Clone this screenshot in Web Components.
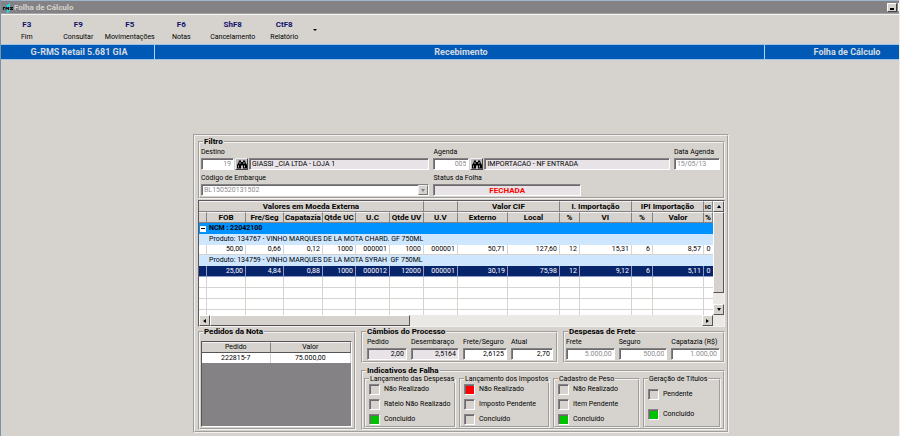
<!DOCTYPE html>
<html lang="pt-BR">
<head>
<meta charset="utf-8">
<title>Folha de Cálculo</title>
<style>
  :root{--face:#d6d3ce;--shade:#848284;--ink:#000;--navy:#10106a;--blue:#0059b5;--ro:#e7e3e7}
  html,body{margin:0;height:100%}
  body{background:var(--face);color:var(--ink);font:7px/8px Roboto,"Liberation Sans",sans-serif;overflow:hidden}
</style>
</head>
<body>
<rms-app></rms-app>
<script>
const base = '*{box-sizing:border-box}input,select,button{font:inherit;color:inherit;margin:0;border-radius:0;outline:0}';
function define(name, render){
  customElements.define(name, class extends HTMLElement{
    connectedCallback(){
      if(this.shadowRoot) return;
      const t = document.createElement('template');
      t.innerHTML = '<style>'+base+'</style>'+render(this);
      this.attachShadow({mode:'open'}).append(t.content.cloneNode(true));
    }
  });
}
const a = (el,n,d='') => el.getAttribute(n) ?? d;

define('rms-titlebar', el => `<style>
  :host{display:flex;align-items:center;height:15px;padding:0 0 0 2px;gap:1px;background:var(--shade);border-top:1px solid #9db6cc;border-bottom:1px solid #f4f3f1;box-shadow:inset 0 -1px #a5a2a4;color:var(--face);font-size:8px;line-height:12px;font-weight:bold;overflow:hidden}
  h1{margin:0;font:inherit;flex:1}
  button{width:10px;height:9px;padding:0;background:var(--face);border:1px solid;border-color:#fff #444 #444 #fff;display:flex;flex:none;align-items:flex-end;justify-content:center}
  button i{width:4px;height:2px;background:#000;margin-bottom:1px}
  button.max{width:1px;border-right:0}
</style>
<svg width="10" height="10" viewBox="0 0 10 10" aria-hidden="true">
  <path d="M3 3L7 0L7 3L4 5ZM3 9L5 6L7 7L5 10Z" fill="#18e0e8"/>
  <path d="M0 4h2v1H1v2H0ZM2.500 4h1.500l.5 1 .5-1H6v3H5V6H3.500v1h-1ZM7 4h3v1H8.500l1.500 1v1H7V6h1.500L7 5Z" fill="#0b1418"/>
  <path d="M5 3h2v1H5Z" fill="#18e0e8"/>
</svg>
<h1><slot></slot></h1>
<button aria-label="Minimizar"><i></i></button><button class="max" aria-label="Maximizar"></button>`);

define('rms-tool', el => `<style>
  :host{display:block}
  button{width:100%;border:0;background:none;padding:5px 0 3px;display:grid;gap:2px;justify-items:center;white-space:nowrap;line-height:10px}
  b{color:var(--navy);font-size:8px}
</style><button><b>${a(el,'key')}</b><span><slot></slot></span></button>`);

define('rms-toolbar', () => `<style>
  :host{display:flex;align-items:center;height:29px}
  nav{display:grid;grid-template-columns:repeat(6,1fr);width:309px}
  .more{border:0;background:none;padding:0 3px;height:8px;display:flex;align-items:center}
  .more i{border:2px solid transparent;border-top-color:#000;border-bottom:0}
</style><nav><slot></slot></nav><button class="more" aria-label="Mais opções"><i></i></button>`);

define('rms-banner', () => `<style>
  :host{display:grid;grid-template-columns:154px 1fr 156px;margin-right:-22px;height:16px;background:var(--blue);border:1px solid #9cc3ea;border-width:1px 0;color:#d3dbe2;font-size:9px;line-height:14px;font-weight:bold;text-align:center}
  ::slotted(*){display:block;padding-left:3px}
  ::slotted(:not(:last-child)){border-right:1px solid #b5d3f0}
  ::slotted(:last-child){padding-left:8px}
</style><slot></slot>`);

define('rms-group', el => `<style>
  :host{display:block;min-width:0}
  fieldset{margin:0;min-width:0;height:100%;border:2px groove #f3f2f0;padding:var(--group-pad,2px 3px 1px 1px)}
  legend{padding:0 1px;margin-left:2px;line-height:8px;height:8px;white-space:nowrap;color:#000;font-size:8px;font-weight:bold}
  :host([minor]) legend{font-size:7px;font-weight:normal;margin-left:0}
</style><fieldset><legend>${a(el,'label')}</legend><slot></slot></fieldset>`);

const well = `border:1px solid;border-color:var(--shade) #fff #fff var(--shade);box-shadow:inset 1px 1px #6b696b`;

define('rms-field', el => `<style>
  :host{display:block;min-width:0}
  label{display:block;line-height:8px;white-space:nowrap;margin-bottom:2px}
  .line{display:flex;gap:1px}
  input{display:block;min-width:0;width:100%;height:12px;padding:0 2px;line-height:10px;background:#fff;${well}}
  input:disabled{color:#8d8b8d;-webkit-text-fill-color:#8d8b8d}
  input[readonly]{background:var(--ro)}
  .num{text-align:right}
  .code{flex:none;width:${a(el,'code-width','33')}px}
  :host([alert]) input{color:#f00;font-weight:bold;font-size:8px;text-align:center}
  button{flex:none;width:13px;height:12px;padding:0;background:#bdbabd;border:1px solid;border-color:#eee #444 #444 #eee;display:flex;align-items:center;justify-content:center}
  .combo{position:relative}
  select{appearance:none;display:block;width:100%;height:12px;padding:0 14px 0 2px;line-height:10px;background:#fff;opacity:1;${well}}
  select:disabled{color:#8d8b8d}
  .drop{position:absolute;right:1px;top:1px;width:10px;height:10px;background:var(--face);border:1px solid;border-color:#eee #777 #777 #eee;display:flex;align-items:center;justify-content:center;pointer-events:none}
  .drop i{border:2px solid transparent;border-top:3px solid var(--shade);border-bottom:0}
</style>
<label for="f">${a(el,'label')}</label>` + (
  el.hasAttribute('combo') ? `<div class="combo"><select id="f" disabled><option>${a(el,'value')}</option></select><span class="drop"><i></i></span></div>` :
  el.hasAttribute('code') ? `<div class="line"><input id="f" class="num code" disabled value="${a(el,'code')}">
    <button aria-label="Pesquisar ${a(el,'label')}"><svg width="10" height="9" viewBox="0 0 10 9" aria-hidden="true"><path d="M2 0.500H4V2H6V0.500H8L8.500 2.500L10 5V8.500H6V5.500H4V8.500H0V5L1.500 2.500Z" fill="#000"/><path d="M1.500 5.500V7.500M7.500 5.500V7.500M3 2V4M7 2V4" stroke="#bbb" stroke-width=".9"/></svg></button>
    <input readonly aria-label="${a(el,'label')} (descrição)" value="${a(el,'value')}"></div>` :
  `<input id="f" class="${el.hasAttribute('num')?'num':''}" value="${a(el,'value')}" ${el.hasAttribute('off')?'disabled':''} ${el.hasAttribute('ro')?'readonly':''}>`));

define('rms-light', el => `<style>
  :host{display:flex;align-items:center;gap:4px;line-height:11px;white-space:nowrap}
  i{flex:none;width:11px;height:11px;background:${a(el,'color','var(--face)')};${well}}
</style><i></i><slot></slot>`);

const cells = list => list.map(v=>`<td>${v}</td>`).join('');
define('rms-sheet', () => `<style>
  :host{display:block;background:#fff;border:1px solid;border-color:#5a585a #f3f2f0 #f3f2f0 #5a585a}
  .frame{display:grid;grid-template-columns:minmax(0,1fr) 11px;grid-template-rows:auto 11px}
  table{width:100%;table-layout:fixed;border-collapse:separate;border-spacing:0}
  th,td{padding:0;white-space:nowrap;overflow:hidden}
  th{height:11px;line-height:9px;font-size:8px;color:#000;background:var(--face);border:1px solid;border-color:#f3f2f0 #848284 #848284 #f3f2f0;border-left-width:0}
  td{height:11px;line-height:10px;text-align:right;padding-right:2px;border-right:1px solid #d6d3ce;border-bottom:1px solid #d6d3ce}
  td:last-child{text-align:center;padding:0;border-right:0}
  .ncm td,.prod td{text-align:left;border:0;line-height:11px;padding-left:2px}
  .ncm td{background:#0092ff;color:#000;font-weight:bold}
  .prod td{background:#cee7ff}
  .ncm td:first-child{padding:0}
  .box{display:block;width:6px;height:6px;margin-left:1px;background:#fff linear-gradient(#000,#000) center/4px 1px no-repeat}
  .val td{height:10px;line-height:9px}
  .sel td{background:#08246b;color:#fff;border-color:#8c9cc6}
  .cut td{height:5px;border-bottom:0}
  .v,.h{background:#ebe9e6;display:flex}
  .v{flex-direction:column}
  .v button,.h button,.thumb{width:11px;height:11px;padding:0;flex:none;background:var(--face);border:1px solid;border-color:#fff #555 #555 #fff;display:flex;align-items:center;justify-content:center}
  .v .thumb{height:auto;flex:0 0 81px}
  .h .thumb{width:39%}
  .gap{flex:1}
  .corner{background:#ebe9e6}
  i{border:2px solid transparent}
  .up{border-bottom:3px solid #000;border-top:0}.down{border-top:3px solid #000;border-bottom:0}
  .left{border-right:3px solid #000;border-left:0}.right{border-left:3px solid #000;border-right:0}
</style>
<div class="frame">
<table>
  <colgroup>${[8,39,38,39,33,34,34,34,50,52,20,52,21,51,9].map(w=>`<col style="width:${(w/5.14).toFixed(2)}%">`).join('')}</colgroup>
  <thead>
    <tr><th colspan="7">Valores em Moeda Externa</th><th></th><th colspan="2">Valor CIF</th><th colspan="2">I. Importação</th><th colspan="2">IPI Importação</th><th>ıc</th></tr>
    <tr>${['','FOB','Fre/Seg','Capatazia','Qtde UC','U.C','Qtde UV','U.V','Externo','Local','%','VI','%','Valor','%'].map(v=>`<th>${v}</th>`).join('')}</tr>
  </thead>
  <tbody>
    <tr class="ncm"><td><span class="box"></span></td><td colspan="14" style="text-align:left">NCM : 22042100</td></tr>
    <tr class="prod"><td></td><td colspan="14" style="text-align:left">Produto: 134767 - VINHO MARQUES DE LA MOTA CHARD. GF 750ML</td></tr>
    <tr class="val">${cells(['','50,00','0,66','0,12','1000','000001','1000','000001','50,71','127,60','12','15,31','6','8,57','0'])}</tr>
    <tr class="prod"><td></td><td colspan="14" style="text-align:left">Produto: 134759 - VINHO MARQUES DE LA MOTA SYRAH &nbsp;GF 750ML</td></tr>
    <tr class="sel">${cells(['','25,00','4,84','0,88','1000','000012','12000','000001','30,19','75,98','12','9,12','6','5,11','0'])}</tr>
    ${['','','','cut'].map(c=>`<tr class="${c}">${cells(Array(15).fill(''))}</tr>`).join('')}
  </tbody>
</table>
<div class="v"><button aria-label="Acima"><i class="up"></i></button><div class="thumb"></div><div class="gap"></div><button aria-label="Abaixo"><i class="down"></i></button></div>
<div class="h"><button aria-label="Esquerda"><i class="left"></i></button><div class="thumb"></div><div class="gap"></div><button aria-label="Direita"><i class="right"></i></button></div>
<div class="corner"></div>
</div>`);

define('rms-orders', () => `<style>
  :host{display:block;height:86px;background:var(--shade);border:1px solid;border-color:#555 #fff #fff #555}
  table{width:100%;table-layout:fixed;border-collapse:separate;border-spacing:0;text-align:center}
  th{padding:0;font-weight:normal;height:11px;line-height:9px;background:var(--face);border:1px solid;border-color:#f3f2f0 #848284 #555 #f3f2f0;border-left-width:0}
  td{padding:0;height:10px;line-height:9px;background:#fff;border-right:1px solid #d6d3ce}
  col:first-child{width:46%}
</style><table><colgroup><col><col></colgroup><thead><tr><th>Pedido</th><th>Valor</th></tr></thead><tbody><tr><td>222815-7</td><td>75.000,00</td></tr></tbody></table>`);

define('rms-app', () => `<style>
  :host{display:block;min-height:100%;border-left:1px solid #7c93a6;border-right:1px solid #efedea;overflow:hidden}
  main{margin:74px 170px 0 192px;border:2px groove #f3f2f0;padding:2px 2px 1px 3px}
  .filter{display:grid;grid-template-columns:228fr 236fr 46fr;gap:4px}
  .filter rms-field[alert]{margin-right:89px}
  rms-sheet{margin:1px 0}
  .bottom{display:grid;grid-template-columns:158fr 364fr;gap:5px}
  .right{display:grid;gap:4px}
  .row{display:grid;gap:5px}
  .top{grid-template-columns:197fr 162fr}
  .rates{display:grid;grid-template-columns:40fr 48fr 44fr 42fr;gap:4px;margin-left:3px}
  .costs{display:grid;grid-template-columns:1fr 1fr 1fr;gap:4px}
  .orders{--group-pad:5px 2px 0 1px}
  .fail{--group-pad:0 2px 0 1px}
  .lights{--group-pad:1px 1px 1px 3px;display:grid;grid-template-columns:92fr 91fr 87fr 78fr;gap:3px}
  .list{display:grid;gap:4px}
  .list.two{gap:9px;padding:5px 0}
</style>
<rms-titlebar>Folha de Cálculo</rms-titlebar>
<rms-toolbar>
  <rms-tool key="F3">Fim</rms-tool><rms-tool key="F9">Consultar</rms-tool><rms-tool key="F5">Movimentações</rms-tool>
  <rms-tool key="F6">Notas</rms-tool><rms-tool key="ShF8">Cancelamento</rms-tool><rms-tool key="CtF8">Relatório</rms-tool>
</rms-toolbar>
<rms-banner><span>G-RMS Retail 5.681 GIA</span><span>Recebimento</span><span>Folha de Cálculo</span></rms-banner>
<main>
  <rms-group label="Filtro"><div class="filter">
    <rms-field label="Destino" code="19" value="GIASSI _CIA LTDA - LOJA 1"></rms-field>
    <rms-field label="Agenda" code="005" code-width="36" value="IMPORTACAO - NF ENTRADA"></rms-field>
    <rms-field label="Data Agenda" off value="15/05/13"></rms-field>
    <rms-field label="Código de Embarque" combo value="BL150520131502"></rms-field>
    <rms-field label="Status da Folha" alert ro value="FECHADA"></rms-field>
  </div></rms-group>
  <rms-sheet></rms-sheet>
  <div class="bottom">
    <rms-group class="orders" label="Pedidos da Nota"><rms-orders></rms-orders></rms-group>
    <div class="right">
      <div class="row top">
        <rms-group label="Câmbios do Processo"><div class="rates">
          <rms-field label="Pedido" num ro value="2,00"></rms-field>
          <rms-field label="Desembaraço" num ro value="2,5164"></rms-field>
          <rms-field label="Frete/Seguro" num value="2,6125"></rms-field>
          <rms-field label="Atual" num value="2,70"></rms-field>
        </div></rms-group>
        <rms-group label="Despesas de Frete"><div class="costs">
          <rms-field label="Frete" num off value="5.000,00"></rms-field>
          <rms-field label="Seguro" num off value="500,00"></rms-field>
          <rms-field label="Capatazia (R$)" num off value="1.000,00"></rms-field>
        </div></rms-group>
      </div>
      <rms-group class="fail" label="Indicativos de Falha"><div class="lights">
        <rms-group minor label="Lançamento das Despesas"><div class="list">
          <rms-light>Não Realizado</rms-light><rms-light>Rateio Não Realizado</rms-light><rms-light color="#00c300">Concluído</rms-light>
        </div></rms-group>
        <rms-group minor label="Lançamento dos Impostos"><div class="list">
          <rms-light color="#f00">Não Realizado</rms-light><rms-light>Imposto Pendente</rms-light><rms-light>Concluído</rms-light>
        </div></rms-group>
        <rms-group minor label="Cadastro de Peso"><div class="list">
          <rms-light>Não Realizado</rms-light><rms-light>Item Pendente</rms-light><rms-light color="#00c300">Concluído</rms-light>
        </div></rms-group>
        <rms-group minor label="Geração de Títulos"><div class="list two">
          <rms-light>Pendente</rms-light><rms-light color="#00c300">Concluído</rms-light>
        </div></rms-group>
      </div></rms-group>
    </div>
  </div>
</main>`);
</script>
</body>
</html>
